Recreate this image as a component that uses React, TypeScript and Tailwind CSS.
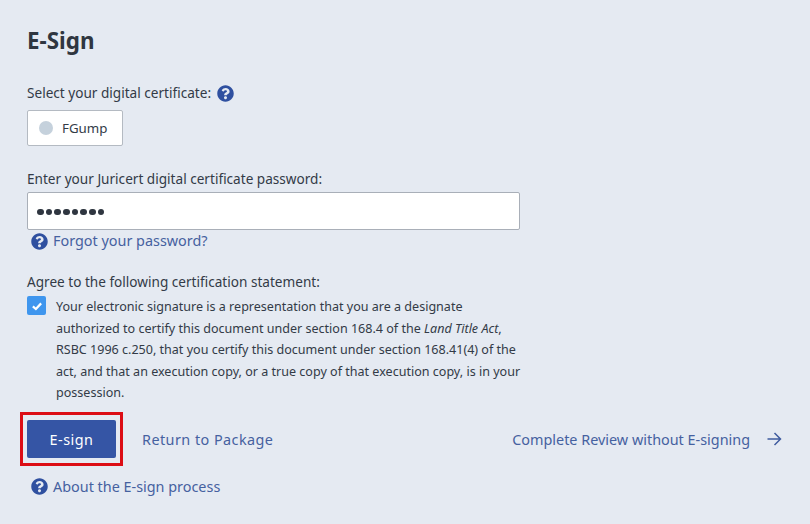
import React from "react";

function HelpIcon({ className }: { className?: string }) {
  return (
    <svg viewBox="0 0 512 512" className={className} fill="#2f50a0">
      <path d="M504 256c0 137-111 248-248 248S8 393 8 256 119 8 256 8s248 111 248 248zM262.700 90c-54.500 0-89.300 23-116.500 63.800-3.500 5.300-2.400 12.400 2.700 16.300l34.700 26.300c5.200 3.900 12.600 3 16.700-2.100 17.900-22.700 30.100-35.800 57.300-35.800 20.400 0 45.700 13.100 45.700 32.900 0 15-12.400 22.700-32.500 34-23.500 13.200-54.600 29.600-54.600 70.600V300c0 6.600 5.400 12 12 12h56c6.600 0 12-5.400 12-12v-1.400c0-28.400 83-29.600 83-106.500 0-58-60.100-102.100-116.500-102.100zM256 337c-25.400 0-46 20.600-46 46 0 25.400 20.600 46 46 46s46-20.600 46-46c0-25.400-20.600-46-46-46z" />
    </svg>
  );
}

export default function App() {
  return (
    <div className="h-[524px] w-[810px] overflow-hidden bg-[#e5eaf2] pl-[27px] pr-[28px] pt-[26px] font-['Noto_Sans',sans-serif] text-[13.6px] text-[#333b47]">
      <h1 className="h-[30px] text-[22.4px] font-bold leading-[30px] text-[#2f3640]">E-Sign</h1>

      {/* Certificate */}
      <div className="mt-[27px] flex h-[20px] items-center gap-[6px] leading-[20px]">
        <span>Select your digital certificate:</span>
        <HelpIcon className="h-[17px] w-[17px]" />
      </div>
      <div className="mt-[7px] flex h-[36px] w-[96px] items-center rounded-[2px] border border-[#b4bac2] bg-white pl-[11px]">
        <span className="h-[14px] w-[14px] rounded-full bg-[#c5d1dc]" />
        <span className="ml-[9px] pt-[1px] text-[13.3px]">FGump</span>
      </div>

      {/* Password */}
      <div className="mt-[23px] h-[20px] leading-[20px]">Enter your Juricert digital certificate password:</div>
      <div className="mt-[3px] flex h-[38px] w-[493px] items-center rounded-[2px] border border-[#a9afb8] bg-white pl-[9px] pt-[2px]">
        <span className="flex gap-[2.2px]">
          {[0, 1, 2, 3, 4, 5, 6, 7].map((i) => (
            <span key={i} className="h-[6.5px] w-[6.5px] rounded-full bg-[#2f3640]" />
          ))}
        </span>
      </div>
      <div className="mt-[1px] flex h-[20px] items-center pl-[4px]">
        <HelpIcon className="h-[17px] w-[17px]" />
        <a className="ml-[5px] text-[14.4px] text-[#4561a0]">Forgot your password?</a>
      </div>

      {/* Statement */}
      <div className="mt-[21px] h-[20px] leading-[20px]">Agree to the following certification statement:</div>
      <div className="mt-[4px] flex">
        <span className="flex h-[19px] w-[19px] shrink-0 items-center justify-center rounded-[2px] bg-[#3f96ee]">
          <svg viewBox="0 0 16 16" className="h-[12px] w-[12px]" fill="none" stroke="#fff" strokeWidth="3">
            <path d="M2.5 8.5 6.5 12 13.5 4.5" />
          </svg>
        </span>
        <p className="ml-[10px] w-[466px] text-[12.55px] leading-[21.5px]">
          Your electronic signature is a representation that you are a designate authorized to certify this document
          under section 168.4 of the <em>Land Title Act</em>, RSBC 1996 c.250, that you certify this document under
          section 168.41(4) of the act, and that an execution copy, or a true copy of that execution copy, is in your
          possession.
        </p>
      </div>

      {/* Actions */}
      <div className="mt-[8.5px] flex items-center">
        <div className="-ml-[7px] border-[3px] border-[#dc0d15] px-[4px] py-[5px]">
          <button className="block h-[38px] w-[89px] rounded-[2px] bg-[#3555a5] pt-[1px] text-[14.4px] tracking-[0.5px] text-white">E-sign</button>
        </div>
        <a className="ml-[19px] pt-[2px] text-[14.4px] tracking-[0.45px] text-[#4561a0]">Return to Package</a>
        <a className="ml-auto pt-[2px] text-[14.4px] text-[#4561a0]">Complete Review without E-signing</a>
        <svg viewBox="0 0 16 16" className="ml-[16px] h-[16px] w-[16px]" fill="none" stroke="#3f5c9f" strokeWidth="1.5">
          <path d="M1.5 8H14.5M8.5 2 14.5 8 8.500 14" />
        </svg>
      </div>
      <div className="mt-[10.5px] flex h-[20px] items-center pl-[4px]">
        <HelpIcon className="h-[17px] w-[17px]" />
        <a className="ml-[5px] pt-[1px] text-[14.4px] text-[#4561a0]">About the E-sign process</a>
      </div>
    </div>
  );
}
